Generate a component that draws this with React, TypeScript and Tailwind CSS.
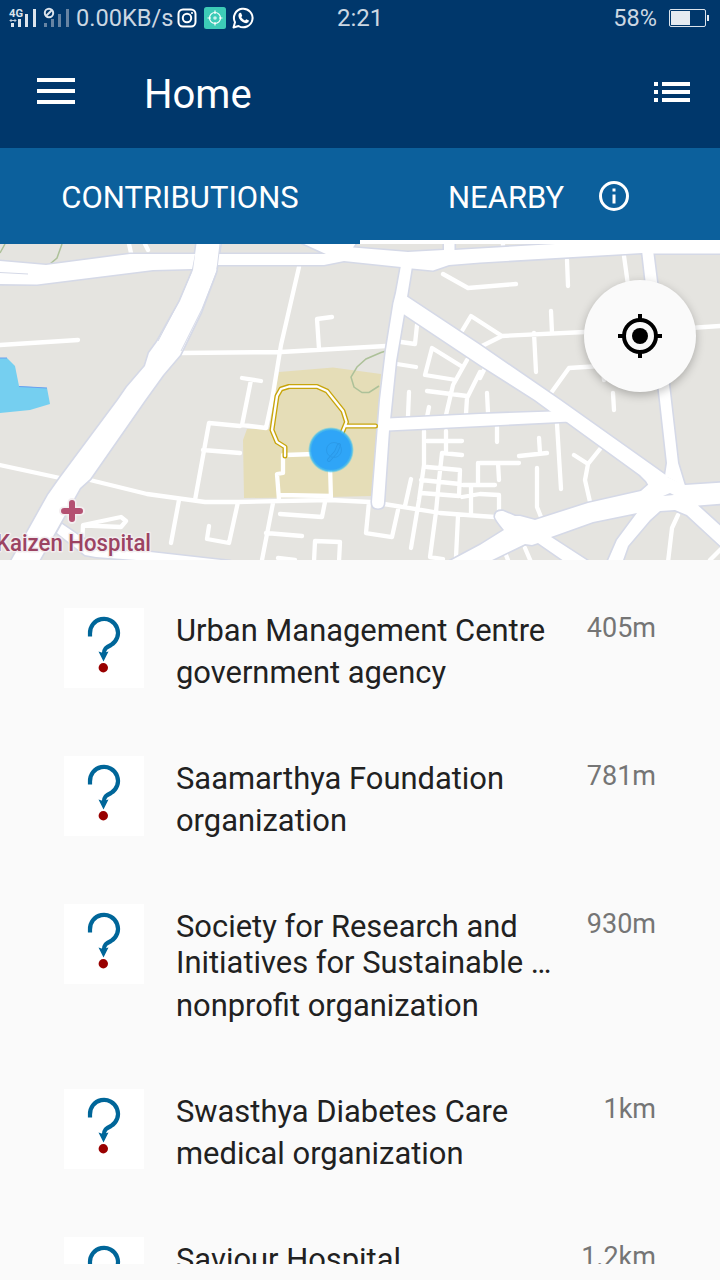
import React from "react";

type Place = { title: string[]; kind?: string; distance: string };

const places: Place[] = [
  { title: ["Urban Management Centre"], kind: "government agency", distance: "405m" },
  { title: ["Saamarthya Foundation"], kind: "organization", distance: "781m" },
  { title: ["Society for Research and", "Initiatives for Sustainable …"], kind: "nonprofit organization", distance: "930m" },
  { title: ["Swasthya Diabetes Care"], kind: "medical organization", distance: "1km" },
  { title: ["Saviour Hospital"], distance: "1.2km" },
];

const majorRoads = [
  "M-5 261L0 261L46 265L130 254H195L192 269L153 270L37 284.5L-5 284Z",
  "M216 254H326L302 243H356L353 247.500L408 252L444 250V240H454.500V250L480 248.500L572 243H730V253.500H653L642 253L480 262.500L449 265L433 270.500L412 268.500L401 267L344 261L324 265H216Z",
  "M197 240L193 270L180 301L157 342L149 353L145 366L127 387L118 400L60 478L48 495L10 563L38 563L80 488L90 479L145 400L163 375L180 355L201 312L216 272L221 240Z",
  "M402 260L396 293L393.500 303L386 350L380 400L372 502Q372 508.500 378 508.500Q384 508.500 384 502L389 430L392 400L396 361L404 314L407 297L413 260Z",
  "M406 296L480 345L560 400L667 476L672 490L640 492L649 486L646 481L640 475L567 422L550 411L535 400L480 365L402 313L397 300Z",
  "M388 418.500L480 414L553 411.500L570 421.500L480 426L387 430.500Z",
  "M642 250L646 285L660 400L667 463L665 476L685 486L678 463L670 393L658 290L653 250Z",
  "M730 482L685 485L665 476L649 484L641 491L588 503L535 520L520 516L515 516L503 511Q495 510 495 517Q495 519 504 530L480 545L450 561L490 561L525 544L532 545L538 543L564 561L588 561L551 537L593 522L637 513L617 540L607 563L622 563L628 546L650 520L660 511L675 510L687 515L725 550V530L698 505.500L730 503Z",
  "M62 524L84 539L96 550L150 552L230 561H150L96 557L85 555L57 533Z",
];

const minorRoads =
  "M0 345L78 340M180 353L281 352L386 346M129 244L131 253M145 244L148 250M0 465L60 478M90 480L147 494L205 502L240 502M240 426L209 423L195 500M203 450L240 453M179 500L171 543M238 502L229 543L207 539L209 526M82 545L83 525L121 517L126 521L121 527L85 525.500M299 267L281 345L272 400L266 428L242 425L247 400L251 380M242 378L261 381M319 349L317 319L332 317M443 274L468 288L516 284M462 331L471 316L502 336L585 332M502 336L480 347M401 342L415 344L417 325M397 364L416 367M461 366L432 348L425 375L456 380M427 391L467 396M467 360L453 385L446 415M480 372L467 398L466 414M409 392L408 416M429 407L427 417M424 431L424 465L419 500L411 548M427 441L462 441M446 431V453M462 455L442 453L439 480L436 512L430 557L443 559M427 467L460 470L459 496L421 493M421 480L460 484M463 485H495M480 463H519M478 463V485M471 485V513M462 497L480 494L499 495V512M238 502L330 500L370 502L384 504L440 513L480 516L495 517M411 479L405 506M398 510L392 537L366 533L369 502M458 516L456 557M285 455L315 454M283 455V473L277 474L279 500M279 495L331 496M330 465L331 500M273 503L262 560M325 502L322 517L280 514M266 533L302 536M314 562L315 541L340 542L339 562M278 558L295 560M567 260L568 286M624 256L628 285M551 311L552 333M534 333L536 372M551 393L569 368L600 366M603 370L604 380M613 393L614 410M690 328L720 326M487 393L488 413M503 244V246M480 378L484 370M497 427V442M557 424L561 489M539 438L540 453M519 456L547 453M498 463L499 480M537 468V507L541 517M574 455L588 464L600 449M588 464L585 480L590 502M678 515L672 528L668 562M525 548L531 562M722 548L710 560M506 555L508 560";

const loopPath =
  "M285 456V447L277 442L272 430L277 396L281 389L289 386.500H317L327 391L343 411L346.500 422L342 433L336 450L329 460M346 426H375.500";

function MapView() {
  return (
    <svg viewBox="0 244 720 316" className="block h-full w-full">
      <defs>
        <radialGradient id="dot">
          <stop offset="0.84" stopColor="#2fa5f7" />
          <stop offset="0.92" stopColor="#38b8f0" stopOpacity="0.85" />
          <stop offset="1" stopColor="#4fd0ea" stopOpacity="0" />
        </radialGradient>
      </defs>
      <rect y="244" width="720" height="316" fill="#e5e4e0" />
      <path d="M279 372L333 367.500L381 374L372 496L330 497L244 498L243 440L247 429L269 429Z" fill="#e5ddb7" />
      <path d="M0 358H7L15 366L19 386L47 388L50 404L30 410L0 413Z" fill="#75cff0" />
      <path d="M0 358H7M19 386.500L47 388" fill="none" stroke="#6a9ff0" strokeWidth="1.200" />
      <path d="M62 244L57 258L50 264M5 244L0 253M386 351L381 352.500L366 359L357 367L351 377L354 387L362 392.500L369 392.500L379 386" fill="none" stroke="#adc199" strokeWidth="1.500" />
      <path d={minorRoads} fill="none" stroke="#fff" strokeWidth="4.300" strokeLinecap="round" strokeLinejoin="round" />
      {majorRoads.map((d, i) => (
        <path key={i} d={d} fill="#fff" stroke="#d5d9e7" strokeWidth="3.200" strokeLinejoin="round" />
      ))}
      {majorRoads.map((d, i) => (
        <path key={i} d={d} fill="#fff" />
      ))}
      <path d="M191 273L178 303L158 341M217 271L202 309L181 351M220 244L217 269M0 272.500L28 274" fill="none" stroke="#d5d9e7" strokeWidth="1" />
      <path d="M663 496L670 493L674 495Z" fill="#d5d9e7" />
      <path d={loopPath} fill="none" stroke="#c8a50b" strokeWidth="5" strokeLinecap="round" strokeLinejoin="round" />
      <path d={loopPath} fill="none" stroke="#fff" strokeWidth="2.300" strokeLinecap="round" strokeLinejoin="round" />
      <circle cx="331" cy="450" r="23" fill="url(#dot)" />
      <path d="M329 460L336 452L339 445" fill="none" stroke="#2a97e6" strokeWidth="4" strokeLinecap="round" />
      <path d="M329 460L336 452L339 445" fill="none" stroke="#2fa3f4" strokeWidth="2.400" strokeLinecap="round" />
      <circle cx="334" cy="450" r="7.500" fill="none" stroke="#2b9bea" />
      <path d="M72 502.500V519.500M63.500 511H80.500" stroke="#f3eef0" strokeWidth="9" strokeLinecap="round" />
      <path d="M72 503V519M64 511H80" stroke="#b45172" strokeWidth="6" strokeLinecap="round" />
      <text x="-4" y="551" textLength="155" lengthAdjust="spacingAndGlyphs" stroke="#f2edef" strokeWidth="3" strokeLinejoin="round" paintOrder="stroke" fill="#9c4362" className="font-[Roboto,sans-serif] text-[23px] font-medium">
        Kaizen Hospital
      </text>
    </svg>
  );
}

function QuestionIcon() {
  return (
    <svg viewBox="0 -0.500 80 80" className="size-20 shrink-0 bg-white">
      <path d="M26 28V25A14 14 0 1 1 47 36.500C42 39 40 40 39.800 46" fill="none" stroke="#069" strokeWidth="4.200" />
      <path d="M34.500 43L39.200 44.500L44.500 43L39.500 53Z" fill="#069" />
      <circle cx="39.300" cy="59.200" r="4.700" fill="#900" />
    </svg>
  );
}

function StatusBar() {
  return (
    <div className="flex h-9 items-center text-[24px] text-[#ccd7e2]">
      <svg viewBox="0 0 62 36" className="ml-2 h-9 w-[62px]">
        <text x="1" y="17" textLength="14" lengthAdjust="spacingAndGlyphs" className="font-[Roboto,sans-serif] text-[10.5px] font-bold" fill="#dce4ec">4G</text>
        <path d="M2 20.500H8M3.500 19L2 20.500L3.500 22M6.500 19L8 20.500L6.500 22" fill="none" stroke="#bdcbd9" />
        <path d="M3 23H6V27H3ZM10 19H13V27H10ZM17 14H20V27H17ZM25 9H28V27H25Z" fill="#dce4ec" />
        <path d="M36 23H39V27H36ZM43 19H46V27H43ZM50 14H53V27H50ZM58 9H61V27H58Z" fill="#6784a3" />
        <circle cx="41" cy="13" r="4.200" fill="none" stroke="#dce4ec" strokeWidth="2" />
        <path d="M38 16L44 10" stroke="#dce4ec" strokeWidth="2" />
      </svg>
      <span className="ml-[6px] w-[100px] pt-[2px] text-[23.6px] whitespace-nowrap">0.00KB/s</span>
      <svg viewBox="176 0 80 36" className="h-9 w-20" fill="none" stroke="#fff">
        <rect x="178.500" y="9.500" width="17" height="17" rx="4.500" strokeWidth="2" />
        <circle cx="187" cy="18" r="4.200" strokeWidth="2" />
        <circle cx="192" cy="13" r="1.100" fill="#fff" stroke="none" />
        <rect x="204" y="7" width="22" height="22" rx="2.500" fill="#3dcbb7" stroke="none" />
        <circle cx="215" cy="18" r="5.500" strokeWidth="1.200" />
        <circle cx="215" cy="18" r="1.800" fill="#c8f1eb" stroke="none" />
        <path d="M215 10.500V14M215 22V25.500M207.500 18H211M219 18H222.500" strokeWidth="1.200" />
        <path d="M233.500 27.500L235 22.300A9.300 9.300 0 1 1 238.500 26Z" strokeWidth="2" strokeLinejoin="round" />
        <path d="M239.500 13L241 12.800L242.200 15.800L241.300 17.200Q242.800 19.600 245 20.400L246.300 19.200L249 20.500Q249 22.800 246.200 23.200Q242 22.800 239.200 18.500Q237.500 15 239.500 13Z" fill="#fff" stroke="none" />
      </svg>
      <span className="ml-[81px]">2:21</span>
      <span className="mr-[11px] ml-auto pt-[2px] text-[23.5px]">58%</span>
      <svg viewBox="668 0 42 36" className="mr-[10px] h-9 w-[42px]">
        <rect x="669.500" y="9.500" width="36" height="17" rx="1.500" fill="none" stroke="#dce4ec" />
        <path d="M671 11H690V25H671ZM707 15H709V21H707Z" fill="#e5ebf1" />
      </svg>
    </div>
  );
}

export default function App() {
  return (
    <div className="flex h-[1280px] w-[720px] flex-col overflow-hidden bg-[#fafafa] font-[Roboto,sans-serif]">
      <header className="h-[148px] shrink-0 bg-[#00376b]">
        <StatusBar />
        <div className="flex h-28 items-center pr-[30px] pl-[37px] text-white">
          <svg viewBox="0 0 38 26" className="mb-[2px] h-[26px] w-[38px]" fill="#fff">
            <path d="M0 0H38V4H0ZM0 11H38V15H0ZM0 22H38V26H0Z" />
          </svg>
          <h1 className="ml-[69px] pt-[6px] text-[40px] leading-[48px]">Home</h1>
          <svg viewBox="0 0 36 20" className="ml-auto h-5 w-9" fill="#fff">
            <path d="M0 0H4V4H0ZM8 0H36V4H8ZM0 8H4V12H0ZM8 8H36V12H8ZM0 16H4V20H0ZM8 16H36V20H8Z" />
          </svg>
        </div>
      </header>

      <nav className="grid h-24 shrink-0 grid-cols-2 bg-[#0c609c] text-[31px] text-white">
        <div className="flex items-center justify-center pt-[5px]">CONTRIBUTIONS</div>
        <div className="flex items-center border-b-4 border-white pl-[88px]">
          <span className="w-[151px] pt-[9px]">NEARBY</span>
          <svg viewBox="0 0 30 30" className="mt-1 size-[30px]">
            <circle cx="15" cy="15" r="13.500" fill="none" stroke="#fff" strokeWidth="3" />
            <path d="M13.500 7.500H16.500V10.500H13.500ZM13.500 13.500H16.500V22.500H13.500Z" fill="#fff" />
          </svg>
        </div>
      </nav>

      <section className="relative h-[316px] shrink-0">
        <MapView />
        <button className="absolute top-9 right-6 flex size-28 items-center justify-center rounded-full bg-[#fafafa] shadow-[0_3px_10px_rgba(0,0,0,0.25)]">
          <svg viewBox="0 0 44 44" className="size-11" fill="none" stroke="#000" strokeWidth="4">
            <circle cx="22" cy="22" r="16" />
            <circle cx="22" cy="22" r="8" fill="#000" stroke="none" />
            <path d="M22 0V6M22 38V44M0 22H6M38 22H44" />
          </svg>
        </button>
      </section>

      <main className="h-[704px] shrink-0 overflow-hidden pt-12">
        {places.map((place) => (
          <article key={place.distance} className="flex items-start px-16 pb-7">
            <QuestionIcon />
            <div className="ml-8 min-h-[120px] flex-1 pb-9 text-[30.9px] whitespace-nowrap text-[#212121]">
              <h2 className="pt-[5px] leading-9">
                {place.title.map((line) => (
                  <span key={line} className="block not-first:pb-px">{line}</span>
                ))}
              </h2>
              {place.kind && <p className="mt-1 leading-[39px]">{place.kind}</p>}
            </div>
            <span className="pt-1 text-[27px] leading-8 text-[#757575]">{place.distance}</span>
          </article>
        ))}
      </main>
    </div>
  );
}
